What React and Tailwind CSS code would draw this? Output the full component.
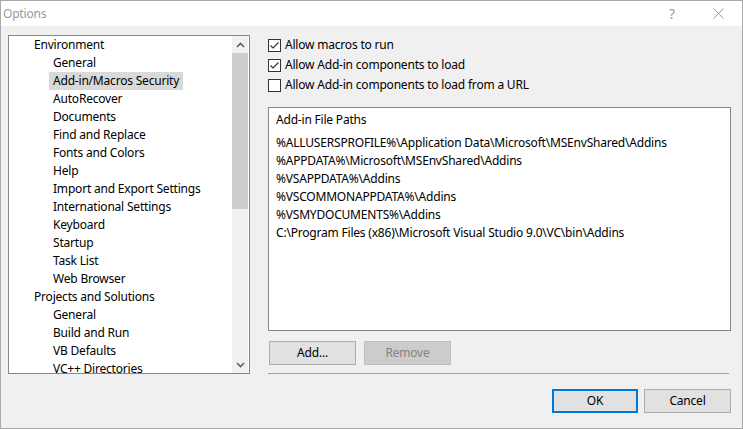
import React from "react";

const tree = [
  { label: "Environment", level: 0 },
  { label: "General", level: 1 },
  { label: "Add-in/Macros Security", level: 1, selected: true },
  { label: "AutoRecover", level: 1 },
  { label: "Documents", level: 1 },
  { label: "Find and Replace", level: 1 },
  { label: "Fonts and Colors", level: 1 },
  { label: "Help", level: 1 },
  { label: "Import and Export Settings", level: 1 },
  { label: "International Settings", level: 1 },
  { label: "Keyboard", level: 1 },
  { label: "Startup", level: 1 },
  { label: "Task List", level: 1 },
  { label: "Web Browser", level: 1 },
  { label: "Projects and Solutions", level: 0 },
  { label: "General", level: 1 },
  { label: "Build and Run", level: 1 },
  { label: "VB Defaults", level: 1 },
  { label: "VC++ Directories", level: 1 },
];

const paths = [
  "%ALLUSERSPROFILE%\\Application Data\\Microsoft\\MSEnvShared\\Addins",
  "%APPDATA%\\Microsoft\\MSEnvShared\\Addins",
  "%VSAPPDATA%\\Addins",
  "%VSCOMMONAPPDATA%\\Addins",
  "%VSMYDOCUMENTS%\\Addins",
  "C:\\Program Files (x86)\\Microsoft Visual Studio 9.0\\VC\\bin\\Addins",
];

function Checkbox({ checked, label }) {
  return (
    <div className="flex items-center h-[20px]">
      <div className="w-[13px] h-[13px] border border-[#333333] bg-white flex items-center justify-center">
        {checked && (
          <svg width="11" height="11" viewBox="0 0 11 11">
            <path d="M1.5 5.5 L4 8 L9.5 2.5" fill="none" stroke="#333333" strokeWidth="1.2" />
          </svg>
        )}
      </div>
      <span className="ml-[4px]">{label}</span>
    </div>
  );
}

function Button({ children, primary, disabled, className = "" }) {
  let cls = "h-[24px] flex items-center justify-center ";
  if (primary) cls += "border-2 border-[#0078d7] bg-[#e1e1e1] text-black";
  else if (disabled) cls += "border border-[#bfbfbf] bg-[#cccccc] text-[#838383]";
  else cls += "border border-[#adadad] bg-[#e1e1e1] text-black";
  return <div className={cls + " " + className}>{children}</div>;
}

export default function App() {
  return (
    <div
      className="w-[743px] h-[429px] bg-[#f0f0f0] border border-[#a9a9a9] flex flex-col text-[12px] tracking-[-0.2px] text-black overflow-hidden"
      style={{ fontFamily: '"Noto Sans", "Open Sans", sans-serif' }}
    >
      {/* title bar */}
      <div className="h-[25px] bg-white flex items-center shrink-0">
        <span className="pl-[2px] text-[#999999]">Options</span>
        <span className="ml-auto w-[14px] text-center text-[#999999] text-[14px] mr-[34px]">?</span>
        <svg width="11" height="11" viewBox="0 0 11 11" className="mr-[18px]">
          <path d="M0.5 0.5 L10.5 10.5 M10.5 0.5 L0.5 10.5" stroke="#999999" strokeWidth="1" />
        </svg>
      </div>

      <div className="flex pl-[7px] pt-[9px]">
        {/* tree */}
        <div className="w-[242px] h-[339px] border border-[#828790] bg-white flex overflow-hidden">
          <div className="flex-1 overflow-hidden">
            {tree.map((item, i) => (
              <div
                key={i}
                className={
                  "h-[18px] flex items-center " + (item.level === 0 ? "pl-[21px]" : "pl-[40px]")
                }
              >
                <span
                  className={
                    "h-[18px] flex items-center px-[4px] whitespace-nowrap " +
                    (item.selected ? "bg-[#d9d9d9]" : "")
                  }
                >
                  {item.label}
                </span>
              </div>
            ))}
          </div>
          <div className="w-[16px] mr-[1px] bg-[#f0f0f0] flex flex-col">
            <div className="h-[17px] flex items-center justify-center">
              <svg width="9" height="6" viewBox="0 0 9 6">
                <path d="M1 5 L4.5 1.5 L8 5" fill="none" stroke="#606060" strokeWidth="1.6" />
              </svg>
            </div>
            <div className="h-[156px] bg-[#cdcdcd]" />
            <div className="flex-1" />
            <div className="h-[17px] flex items-center justify-center">
              <svg width="9" height="6" viewBox="0 0 9 6">
                <path d="M1 1 L4.5 4.5 L8 1" fill="none" stroke="#606060" strokeWidth="1.6" />
              </svg>
            </div>
          </div>
        </div>

        {/* right panel */}
        <div className="ml-[18px] w-[463px] flex flex-col">
          <Checkbox checked label="Allow macros to run" />
          <Checkbox checked label="Allow Add-in components to load" />
          <Checkbox label="Allow Add-in components to load from a URL" />

          <div className="mt-[12px] h-[224px] border border-[#828790] bg-white pl-[7px] pt-[3px]">
            <div className="h-[18px] flex items-center">Add-in File Paths</div>
            <div className="mt-[5px]">
              {paths.map((p, i) => (
                <div key={i} className="h-[18px] flex items-center whitespace-nowrap">
                  {p}
                </div>
              ))}
            </div>
          </div>

          <div className="mt-[10px] flex gap-[8px] pl-[1px]">
            <Button className="w-[87px]">Add...</Button>
            <Button disabled className="w-[87px]">Remove</Button>
          </div>

          <div className="mt-[8px] w-[461px] border-t border-[#a0a0a0]" />

          <div className="mt-[15px] flex justify-end gap-[6px]">
            <Button primary className="w-[86px]">OK</Button>
            <Button className="w-[87px]">Cancel</Button>
          </div>
        </div>
      </div>
    </div>
  );
}
